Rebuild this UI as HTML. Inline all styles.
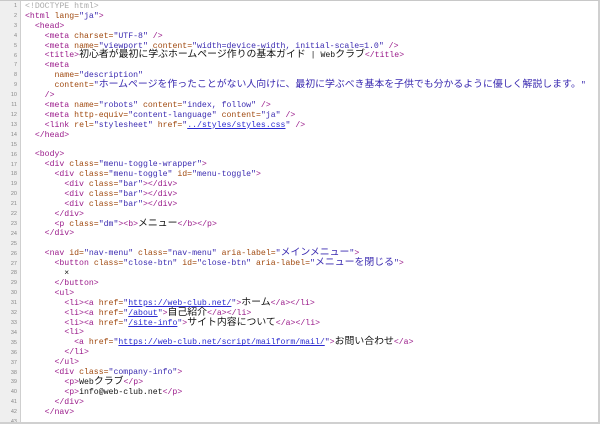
<!DOCTYPE html>
<html><head><meta charset="utf-8"><style>
html,body{margin:0;padding:0;background:#fff;}
#w{position:relative;width:600px;height:424px;overflow:hidden;box-sizing:border-box;border-top:1px solid #c8c8c8;border-right:2px solid #d0d0d0;border-bottom:2px solid #d0d0d0;}
#g{position:absolute;left:0;top:0;width:20px;height:424px;background:#efefef;border-right:1px solid #cfcfcf;}
#n{position:absolute;left:0;top:1px;width:17px;text-align:right;font:5.5px/9.9px "Liberation Sans",sans-serif;color:#888;}
#c{position:absolute;left:25px;top:1px;font:8.2px/9.9px "Liberation Mono","Noto Sans CJK JP",monospace;color:#111;white-space:normal;}
#c div{height:9.9px;line-height:9.9px;overflow:visible;white-space:pre}
.t{color:#9a1a8a}.a{color:#a04a10}.v{color:#3a2ab0}.l{color:#2a2ad0;text-decoration:underline}.cm{color:#aaa}
.j{font-family:"Noto Sans CJK JP",sans-serif;font-size:9.9px;line-height:0}
</style></head><body><div id="w"><div id="g"></div>
<div id="n">1<br>2<br>3<br>4<br>5<br>6<br>7<br>8<br>9<br>10<br>11<br>12<br>13<br>14<br>15<br>16<br>17<br>18<br>19<br>20<br>21<br>22<br>23<br>24<br>25<br>26<br>27<br>28<br>29<br>30<br>31<br>32<br>33<br>34<br>35<br>36<br>37<br>38<br>39<br>40<br>41<br>42<br>43</div>
<div id="c"><div><span class="cm">&lt;!DOCTYPE html&gt;</span></div>
<div><span class="t">&lt;html</span> <span class="a">lang=</span><span class="v">"ja"</span><span class="t">&gt;</span></div>
<div>  <span class="t">&lt;head&gt;</span></div>
<div>    <span class="t">&lt;meta</span> <span class="a">charset=</span><span class="v">"UTF-8"</span> <span class="t">/&gt;</span></div>
<div>    <span class="t">&lt;meta</span> <span class="a">name=</span><span class="v">"viewport"</span> <span class="a">content=</span><span class="v">"width=device-width, initial-scale=1.0"</span> <span class="t">/&gt;</span></div>
<div>    <span class="t">&lt;title&gt;</span><span class="j">初心者が最初に学ぶホームページ作りの基本ガイド</span> | Web<span class="j">クラブ</span><span class="t">&lt;/title&gt;</span></div>
<div>    <span class="t">&lt;meta</span></div>
<div>      <span class="a">name=</span><span class="v">"description"</span></div>
<div>      <span class="a">content=</span><span class="v">"<span class="j">ホームページを作ったことがない人向けに、最初に学ぶべき基本を子供でも分かるように優しく解説します。</span>"</span></div>
<div>    <span class="t">/&gt;</span></div>
<div>    <span class="t">&lt;meta</span> <span class="a">name=</span><span class="v">"robots"</span> <span class="a">content=</span><span class="v">"index, follow"</span> <span class="t">/&gt;</span></div>
<div>    <span class="t">&lt;meta</span> <span class="a">http-equiv=</span><span class="v">"content-language"</span> <span class="a">content=</span><span class="v">"ja"</span> <span class="t">/&gt;</span></div>
<div>    <span class="t">&lt;link</span> <span class="a">rel=</span><span class="v">"stylesheet"</span> <span class="a">href=</span><span class="v">"<span class="l">../styles/styles.css</span>"</span> <span class="t">/&gt;</span></div>
<div>  <span class="t">&lt;/head&gt;</span></div>
<div> </div>
<div>  <span class="t">&lt;body&gt;</span></div>
<div>    <span class="t">&lt;div</span> <span class="a">class=</span><span class="v">"menu-toggle-wrapper"</span><span class="t">&gt;</span></div>
<div>      <span class="t">&lt;div</span> <span class="a">class=</span><span class="v">"menu-toggle"</span> <span class="a">id=</span><span class="v">"menu-toggle"</span><span class="t">&gt;</span></div>
<div>        <span class="t">&lt;div</span> <span class="a">class=</span><span class="v">"bar"</span><span class="t">&gt;&lt;/div&gt;</span></div>
<div>        <span class="t">&lt;div</span> <span class="a">class=</span><span class="v">"bar"</span><span class="t">&gt;&lt;/div&gt;</span></div>
<div>        <span class="t">&lt;div</span> <span class="a">class=</span><span class="v">"bar"</span><span class="t">&gt;&lt;/div&gt;</span></div>
<div>      <span class="t">&lt;/div&gt;</span></div>
<div>      <span class="t">&lt;p</span> <span class="a">class=</span><span class="v">"dm"</span><span class="t">&gt;&lt;b&gt;</span><span class="j">メニュー</span><span class="t">&lt;/b&gt;&lt;/p&gt;</span></div>
<div>    <span class="t">&lt;/div&gt;</span></div>
<div> </div>
<div>    <span class="t">&lt;nav</span> <span class="a">id=</span><span class="v">"nav-menu"</span> <span class="a">class=</span><span class="v">"nav-menu"</span> <span class="a">aria-label=</span><span class="v">"<span class="j">メインメニュー</span>"</span><span class="t">&gt;</span></div>
<div>      <span class="t">&lt;button</span> <span class="a">class=</span><span class="v">"close-btn"</span> <span class="a">id=</span><span class="v">"close-btn"</span> <span class="a">aria-label=</span><span class="v">"<span class="j">メニューを閉じる</span>"</span><span class="t">&gt;</span></div>
<div>        ×</div>
<div>      <span class="t">&lt;/button&gt;</span></div>
<div>      <span class="t">&lt;ul&gt;</span></div>
<div>        <span class="t">&lt;li&gt;&lt;a</span> <span class="a">href=</span><span class="v">"<span class="l">https://web-club.net/</span>"</span><span class="t">&gt;</span><span class="j">ホーム</span><span class="t">&lt;/a&gt;&lt;/li&gt;</span></div>
<div>        <span class="t">&lt;li&gt;&lt;a</span> <span class="a">href=</span><span class="v">"<span class="l">/about</span>"</span><span class="t">&gt;</span><span class="j">自己紹介</span><span class="t">&lt;/a&gt;&lt;/li&gt;</span></div>
<div>        <span class="t">&lt;li&gt;&lt;a</span> <span class="a">href=</span><span class="v">"<span class="l">/site-info</span>"</span><span class="t">&gt;</span><span class="j">サイト内容について</span><span class="t">&lt;/a&gt;&lt;/li&gt;</span></div>
<div>        <span class="t">&lt;li&gt;</span></div>
<div>          <span class="t">&lt;a</span> <span class="a">href=</span><span class="v">"<span class="l">https://web-club.net/script/mailform/mail/</span>"</span><span class="t">&gt;</span><span class="j">お問い合わせ</span><span class="t">&lt;/a&gt;</span></div>
<div>        <span class="t">&lt;/li&gt;</span></div>
<div>      <span class="t">&lt;/ul&gt;</span></div>
<div>      <span class="t">&lt;div</span> <span class="a">class=</span><span class="v">"company-info"</span><span class="t">&gt;</span></div>
<div>        <span class="t">&lt;p&gt;</span>Web<span class="j">クラブ</span><span class="t">&lt;/p&gt;</span></div>
<div>        <span class="t">&lt;p&gt;</span>info@web-club.net<span class="t">&lt;/p&gt;</span></div>
<div>      <span class="t">&lt;/div&gt;</span></div>
<div>    <span class="t">&lt;/nav&gt;</span></div>
</div></div></body></html>
